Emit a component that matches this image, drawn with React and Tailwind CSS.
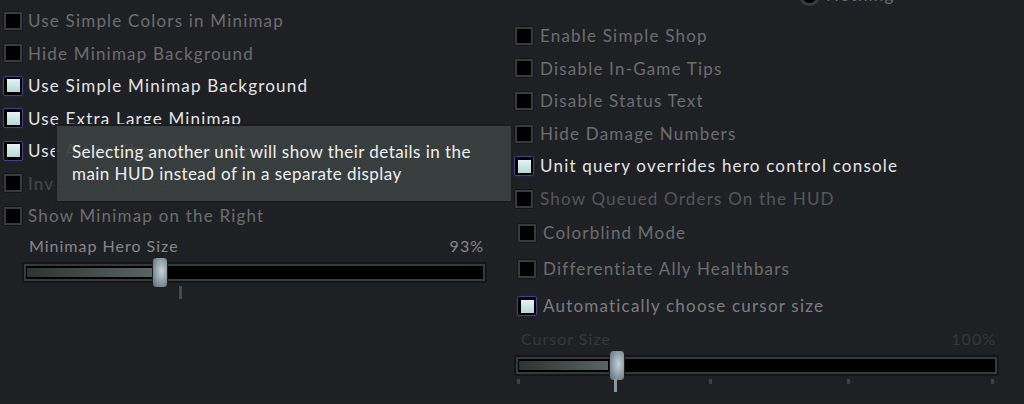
import React from "react";

const font = { fontFamily: "Lato, 'Open Sans', sans-serif" };

function Box({ checked }) {
  if (checked) {
    return (
      <span className="flex h-[20px] w-[20px] shrink-0 items-center justify-center rounded-[2px] border border-[#45408a] bg-black shadow-[0_0_2px_#2c2a66]">
        <span className="h-[13px] w-[13px] bg-gradient-to-b from-[#e4f4f4] to-[#b6d6d6]" />
      </span>
    );
  }
  return (
    <span className="flex h-[20px] w-[20px] shrink-0 items-center justify-center rounded-[2px] border border-[#151618] bg-[#151618]">
      <span className="h-[18px] w-[18px] border-2 border-[#383b3b] bg-black" />
    </span>
  );
}

function Row({ label, checked, tone = "dim", h = "h-[32.5px]", gap = "gap-[5px]" }) {
  const color =
    tone === "on"
      ? "text-[#e4e5e6]"
      : tone === "off"
      ? "text-[#46484b]"
      : tone === "low"
      ? "text-[#55575a]"
      : tone === "mid"
      ? "text-[#7c7e80]"
      : "text-[#6c6e70]";
  return (
    <div className={`flex items-center ${h} ${gap}`}>
      <Box checked={checked} />
      <span className={`text-[17px] tracking-[1.2px] whitespace-nowrap ${color}`}>{label}</span>
    </div>
  );
}

function Slider({ label, value, fill, thumb, ticks, markAt, dim }) {
  return (
    <div className="flex flex-col">
      <div className={`flex justify-between text-[16px] tracking-[1px] leading-[20px] pl-[7px] pr-[3px] ${dim ? "text-[#35373b]" : "text-[#85888b]"}`}>
        <span>{label}</span>
        <span>{value}</span>
      </div>
      <div className="relative mt-[6px] h-[21px] rounded-[2px] bg-[#141518] p-[2px]">
        <div className="h-full border-2 border-[#363a3a] bg-black py-[2px] pl-[1px]">
          <div className="h-full bg-gradient-to-r from-[#2e3434] to-[#5a6464]" style={{ width: fill }} />
        </div>
        <div
          className="absolute top-[-5px] h-[31px] w-[16px] rounded-[4px] border border-[#1c2024] bg-[radial-gradient(ellipse_at_60%_45%,#c4d2dc,#7a8892_70%,#5e6a72)]"
          style={{ left: thumb }}
        />
      </div>
      <div className="relative h-[16px]">
        {ticks.map((t) => (
          <div key={t} className="absolute top-[3px] h-[5px] w-[3px] bg-[#3c4242]" style={{ left: t }} />
        ))}
        <div className={`absolute top-[3px] h-[13px] w-[3px] ${dim ? "bg-[#8a98a2]" : "bg-[#454b4b]"}`} style={{ left: markAt }} />
      </div>
    </div>
  );
}

export default function App() {
  return (
    <div className="relative h-[404px] w-[1024px] overflow-hidden bg-[#1f2024]" style={font}>
      <div className="flex">
        {/* left column */}
        <div className="w-[500px] pl-[3px] pt-[4.5px]">
          <Row label="Use Simple Colors in Minimap" />
          <Row label="Hide Minimap Background" />
          <Row label="Use Simple Minimap Background" checked tone="on" />
          <Row label="Use Extra Large Minimap" checked tone="on" />
          <Row label="Use Alt to Show Hero Icons" checked tone="on" />
          <Row label="Invert Alt Toggle" tone="off" />
          <Row label="Show Minimap on the Right" />
          <div className="ml-[19px] mt-[4px] w-[465px]">
            <Slider label="Minimap Hero Size" value="93%" fill="125px" thumb="130px" ticks={[]} markAt="157px" />
          </div>
        </div>

        {/* right column */}
        <div className="flex-1 pl-[14px] mt-[-21px]">
          <div className="flex h-[32px] items-center gap-[6px] pl-[285px]">
            <span className="h-[21px] w-[21px] rounded-full border-[3px] border-[#3a3d3f] bg-black" />
            <span className="text-[17px] tracking-[1.2px] text-[#6a6c6e]">Nothing</span>
          </div>
          <div className="mt-[8.5px]">
            <Row label="Enable Simple Shop" h="h-[32.6px]" gap="gap-[6px]" />
            <Row label="Disable In-Game Tips" h="h-[32.6px]" gap="gap-[6px]" />
            <Row label="Disable Status Text" h="h-[32.6px]" gap="gap-[6px]" />
            <Row label="Hide Damage Numbers" h="h-[32.6px]" gap="gap-[6px]" />
            <Row label="Unit query overrides hero control console" checked tone="on" h="h-[32.6px]" gap="gap-[6px]" />
            <Row label="Show Queued Orders On the HUD" tone="low" h="h-[32.6px]" gap="gap-[6px]" />
            <div className="pl-[3px]">
              <Row label="Colorblind Mode" h="h-[36px]" gap="gap-[6px]" />
              <Row label="Differentiate Ally Healthbars" h="h-[36px]" gap="gap-[6px]" />
              <Row label="Automatically choose cursor size" checked tone="mid" h="h-[38px]" gap="gap-[6px]" />
            </div>
            <div className="mt-[4px] w-[485px]">
              <Slider label="Cursor Size" value="100%" fill="89px" thumb="95px" ticks={["3px", "195px", "333px", "477px"]} markAt="100px" dim />
            </div>
          </div>
        </div>
      </div>

      {/* tooltip over the left column */}
      <div className="absolute left-[55px] top-[124px] w-[458px] border-2 border-[#1a1c1d] bg-[#3a3f3f]/[0.94] px-[15px] pt-[15px] pb-[16px]">
        <p className="text-[17px] leading-[22px] tracking-[0.45px] text-[#eef0f0]">
          Selecting another unit will show their details in the main HUD instead of in a separate display
        </p>
      </div>
    </div>
  );
}
